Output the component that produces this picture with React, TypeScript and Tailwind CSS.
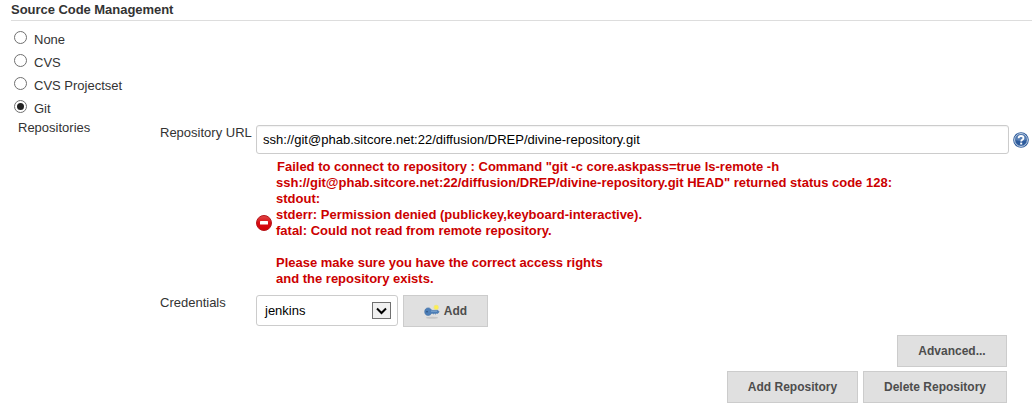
import type { ReactNode } from "react";

const sources = ["None", "CVS", "CVS Projectset", "Git"];

function Radio({ label, checked }: { label: string; checked: boolean }) {
  return (
    <label className="flex h-[23px] shrink-0 items-start">
      <span className="flex size-[13px] items-center justify-center rounded-full border border-[#707070] bg-white">
        {checked && <span className="size-[7px] rounded-full bg-[#222222]" />}
      </span>
      <span className="ml-[7px] mt-px leading-[15px]">{label}</span>
    </label>
  );
}

function Button({ className, children }: { className: string; children: ReactNode }) {
  return (
    <button
      className={`flex h-8 shrink-0 items-center justify-center border border-[#cccccc] bg-[#e0e0e0] text-[12px] font-bold text-[#4d4d4d] ${className}`}
    >
      {children}
    </button>
  );
}

function HelpIcon() {
  return (
    <svg className="ml-1 mt-[7px] shrink-0" width="16" height="16" viewBox="0 0 16 16">
      <circle cx="8" cy="8" r="7.8" fill="#2f5c9c" />
      <circle cx="8" cy="8" r="6.4" fill="#2c5a9c" stroke="#dce6f2" strokeWidth=".9" />
      <path d="M2.4 8a5.6 5.6 0 0 1 11.2 0q-5.6 2-11.2 0" fill="#7da0cc" opacity=".5" />
      <path d="M5.6 6.2Q5.7 4 8 4q2.5 0 2.5 2 0 1.1-1.2 1.8Q8.2 8.5 8.2 9.6" fill="none" stroke="#fff" strokeWidth="1.8" />
      <rect x="7.2" y="10.6" width="2" height="1.9" fill="#fff" />
    </svg>
  );
}

function ErrorIcon() {
  return (
    <svg className="mt-[57px] shrink-0" width="16" height="16" viewBox="0 0 16 16">
      <defs>
        <linearGradient id="err" x1="0" y1="0" x2="0" y2="1">
          <stop offset="0" stopColor="#e04848" />
          <stop offset=".5" stopColor="#d90c12" />
          <stop offset="1" stopColor="#cf0006" />
        </linearGradient>
      </defs>
      <circle cx="8" cy="8" r="7.5" fill="url(#err)" stroke="#b5161a" />
      <rect x="4" y="6" width="8" height="3.5" rx=".5" fill="#fff" />
    </svg>
  );
}

function KeyIcon() {
  return (
    <svg className="mr-1 mt-px shrink-0" width="16" height="16" viewBox="0 0 16 16">
      <ellipse cx="8" cy="13.8" rx="6" ry="1" fill="#aaa" opacity=".5" />
      <circle cx="12.2" cy="3.3" r="2.6" fill="#f5e84c" opacity=".6" />
      <rect x="10.8" y="1.8" width="3" height="3" fill="#fff04a" />
      <path
        d="M4.2 3.9C2 3.9.7 5.5.7 7.7s1.3 3.7 3.5 3.7c1.6 0 2.8-.9 3.4-2.1h1l.8.8 1-.8 1 .8.9-.8h1.7l1.1-1.5-1.1-1.4H7.6C7 4.9 5.8 3.9 4.2 3.9Z"
        fill="#4d7fb8"
        stroke="#3b6ba4"
        strokeWidth=".6"
      />
      <path d="M7 7.3h6" stroke="#82a9d3" strokeWidth=".8" />
      <circle cx="3" cy="7.7" r=".8" fill="#294b75" />
    </svg>
  );
}

export default function App() {
  return (
    <main className="h-[410px] w-[1032px] overflow-hidden bg-white font-['Liberation_Sans',Arial,sans-serif] text-[13px] leading-4 text-[#333333]">
      <h1 className="ml-[11px] h-[21px] border-b border-[#dddddd] pt-0.5 font-bold tracking-[-0.04px]">
        Source Code Management
      </h1>
      <div className="ml-[14px] flex h-[99px] flex-col pt-[10px]">
        {sources.map((source) => (
          <Radio key={source} label={source} checked={source === "Git"} />
        ))}
      </div>

      <section className="flex">
        <div className="w-[160px] shrink-0 pl-[18px]">Repositories</div>
        <div className="flex flex-col pt-[5px]">
          <div className="flex">
            <div className="w-24 shrink-0 whitespace-nowrap">Repository URL</div>
            <input
              className="h-[29px] w-[753px] shrink-0 rounded-[3px] border border-[#cccccc] bg-white px-[6px] text-[13px] tracking-[0.02px] text-black shadow-[inset_0_1px_1px_#0000000d] outline-none"
              readOnly
              value="ssh://git@phab.sitcore.net:22/diffusion/DREP/divine-repository.git"
            />
            <HelpIcon />
          </div>

          <div className="ml-24 mt-1 flex h-[137px]">
            <ErrorIcon />
            <div className="ml-1 mt-px whitespace-pre font-bold text-[#cc0000]">
              <div className="pl-px">{'Failed to connect to repository : Command "git -c core.askpass=true ls-remote -h'}</div>
              <div>{'ssh://git@phab.sitcore.net:22/diffusion/DREP/divine-repository.git HEAD" returned status code 128:'}</div>
              <div>stdout:</div>
              <div>stderr: Permission denied (publickey,keyboard-interactive).</div>
              <div>fatal: Could not read from remote repository.</div>
              <div className="mt-4">Please make sure you have the correct access rights</div>
              <div>and the repository exists.</div>
            </div>
          </div>

          <div className="flex h-10">
            <div className="w-24 shrink-0">Credentials</div>
            <div className="flex h-[31px] w-[142px] shrink-0 items-center justify-between rounded-[3px] border border-[#cccccc] pl-2 pr-[6px] text-black">
              jenkins
              <span className="flex h-[17px] w-[19px] items-center justify-center border border-[#707070] bg-[#f0f0f0]">
                <svg width="11" height="8" viewBox="0 0 11 8">
                  <path d="m1 1.5 4.5 4.5L10 1.5" fill="none" stroke="#000" strokeWidth="2" />
                </svg>
              </span>
            </div>
            <Button className="ml-[5px] w-[85px]">
              <KeyIcon />
              Add
            </Button>
          </div>
          <div className="flex w-[847px] justify-end">
            <Button className="w-[110px]">Advanced...</Button>
          </div>
          <div className="mt-1 flex w-[847px] justify-end gap-[5px]">
            <Button className="w-[131px]">Add Repository</Button>
            <Button className="w-[144px]">Delete Repository</Button>
          </div>
        </div>
      </section>
    </main>
  );
}
